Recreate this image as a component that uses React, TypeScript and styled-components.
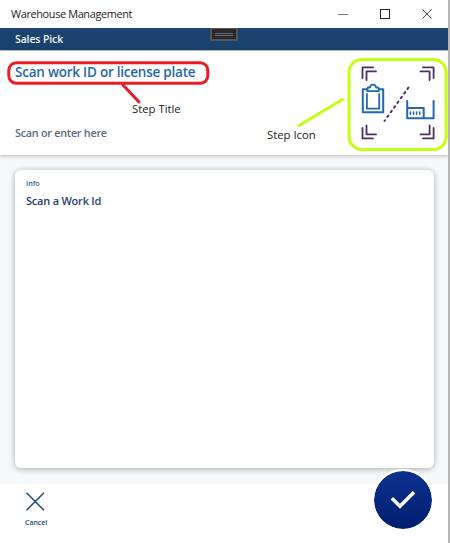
import React from "react";
import styled, { createGlobalStyle } from "styled-components";

const GlobalStyle = createGlobalStyle`
  * { box-sizing: border-box; }
  body { margin: 0; background: #fff; overflow: hidden; }
`;

const Window = styled.div`
  position: relative;
  display: flex;
  flex-direction: column;
  width: 450px;
  height: 543px;
  border-right: 2px solid #b5b5b5;
  background: #fff;
  font-family: "Open Sans", "Noto Sans", sans-serif;
  overflow: hidden;
`;

const Label = styled.span<{ $size: number; $color: string; $weight?: number; $spacing?: number }>`
  font-size: ${(p) => p.$size}px;
  line-height: 16px;
  color: ${(p) => p.$color};
  font-weight: ${(p) => p.$weight ?? 400};
  letter-spacing: ${(p) => p.$spacing ?? 0}px;
  white-space: nowrap;
`;

const TitleBar = styled.header`
  display: flex;
  flex: 0 0 28px;
  align-items: center;
  justify-content: space-between;
  padding: 0 16px 0 11px;
`;

const WindowControls = styled.div`
  display: flex;
  align-items: center;
  gap: 32px;
  svg { display: block; }
`;

const NavBar = styled.nav`
  display: flex;
  flex: 0 0 23px;
  align-items: center;
  padding: 0 0 1px 15px;
  background: #1b416f;
  border-bottom: 1px solid #bac6d6;
`;

const DebugHandle = styled.div`
  position: absolute;
  left: 210px;
  top: 28px;
  width: 28px;
  height: 13px;
  display: flex;
  align-items: center;
  justify-content: center;
  background: #292a2d;
  border: 2px solid #565656;
  border-top-width: 1px;
`;

const Grip = styled.div`
  width: 18px;
  height: 3px;
  border: solid #68696b;
  border-width: 1px 0;
`;

const ScanPanel = styled.section`
  display: flex;
  flex: 0 0 104px;
  flex-direction: column;
  justify-content: space-between;
  align-items: flex-start;
  padding: 13px 15px 14px;
  background: #fff;
  box-shadow: 0 1px 4px rgba(0, 0, 0, 0.25);
  z-index: 1;
`;

const Content = styled.main`
  display: flex;
  flex: 1;
  padding: 15px 14px 16px 15px;
  background: #f7f8fa;
`;

const Card = styled.article`
  display: flex;
  flex: 1;
  flex-direction: column;
  gap: 2px;
  padding: 5px 11px;
  border-radius: 6px;
  background: #fff;
  box-shadow: 0 1px 6px rgba(0, 0, 0, 0.32);
`;

const Footer = styled.footer`
  display: flex;
  flex: 0 0 59px;
  align-items: flex-start;
  padding: 7px 25px;
  background: #fff;
`;

const CancelButton = styled.button`
  display: flex;
  flex-direction: column;
  align-items: flex-start;
  gap: 3px;
  padding: 0;
  border: 0;
  background: none;
  font-family: inherit;
`;

const ConfirmButton = styled.button`
  position: absolute;
  left: 372px;
  top: 468.5px;
  width: 62px;
  height: 62px;
  padding: 0;
  border: 2px solid #fff;
  border-radius: 50%;
  background: linear-gradient(#0c328e, #001d70) padding-box;
  svg { display: block; }
`;

const Annotations = styled.div`
  position: absolute;
  inset: 0;
  z-index: 2;
  pointer-events: none;
  > svg { position: absolute; inset: 0; }
`;

const Callout = styled.div<{ $x: number; $y: number }>`
  position: absolute;
  left: ${(p) => p.$x}px;
  top: ${(p) => p.$y}px;
  line-height: 16px;
  display: flex;
`;

const StepIcon = styled.svg`
  position: absolute;
  left: 360px;
  top: 65px;
  z-index: 1;
`;

function ScanStepIcon() {
  return (
    <StepIcon width="76" height="76" fill="none">
      <g stroke="#493068" strokeWidth="1.8" strokeLinecap="round" strokeLinejoin="round">
        <path d="M2.5 13V2.4H13M6.5 15V6.4H16" />
        <path d="M63 2.4H73.6V13M60.5 6.4H69.6V15" />
        <path d="M2.5 63V73.4H13M6.5 60.5V69.4H16" />
        <path d="M63 73.4H73.6V63M60.5 69.4H69.6V60.5" />
        <path d="M48.5 22.5L24.5 56" strokeWidth="2" strokeDasharray="1.7 4.05" />
      </g>
      <g stroke="#2268b2" strokeWidth="2" strokeLinecap="round" strokeLinejoin="round">
        <path d="M7.5 24.3H2.8V47.2H23.2V24.3H18.7" />
        <path d="M6.9 29V43.7H19.2V29" strokeWidth="1.8" />
        <path d="M7.3 26.2V23.5Q7.3 22.5 8.5 22.5H10Q10.3 19.6 13 19.6T16 22.5H17.5Q18.7 22.5 18.7 23.5V26.2Z" strokeWidth="1.8" />
        <path d="M47.2 36V53.2H73.6V36M47.2 42.9H63.7V53.2" />
        <path d="M50.4 47V49.2M53.5 47V49.2M56.6 47V49.2M59.7 47V49.2" strokeWidth="1.6" />
      </g>
    </StepIcon>
  );
}

export default function App() {
  return (
    <>
      <GlobalStyle />
      <Window>
        <TitleBar>
          <Label $size={10.9} $color="#222" $spacing={-0.35}>Warehouse Management</Label>
          <WindowControls>
            <svg width="10" height="10"><path d="M0 5.5H10" stroke="#555" strokeWidth="0.8" /></svg>
            <svg width="10" height="10"><rect x=".5" y=".5" width="9" height="9" fill="none" stroke="#222" /></svg>
            <svg width="10" height="10"><path d="M.5 .5L9.5 9.5M9.5 .5L.5 9.5" stroke="#333" strokeWidth="0.9" /></svg>
          </WindowControls>
        </TitleBar>
        <NavBar>
          <Label $size={10.5} $weight={600} $color="#f2f5f8" $spacing={-0.12}>Sales Pick</Label>
          <DebugHandle><Grip /></DebugHandle>
        </NavBar>
        <ScanPanel>
          <Label $size={13.5} $weight={600} $color="#2867ae" $spacing={-0.23}>Scan work ID or license plate</Label>
          <Label $size={10.8} $weight={600} $color="#5c6b82" $spacing={-0.25}>Scan or enter here</Label>
        </ScanPanel>
        <ScanStepIcon />
        <Content>
          <Card>
            <Label $size={7.2} $weight={600} $color="#33639c">Info</Label>
            <Label $size={11} $weight={600} $color="#1f4270" $spacing={-0.22}>Scan a Work Id</Label>
          </Card>
        </Content>
        <Footer>
          <CancelButton>
            <svg width="20" height="21"><path d="M1.5 1.8L19 19.3M19 1.8L1.5 19.3" stroke="#234a7a" strokeWidth="1.5" /></svg>
            <Label $size={7} $weight={600} $color="#234a7a" $spacing={-0.05}>Cancel</Label>
          </CancelButton>
        </Footer>
        <ConfirmButton aria-label="Confirm">
          <svg width="58" height="58"><path d="M17.8 27.3L26 35.3L40 21.2" fill="none" stroke="#fff" strokeWidth="3.6" /></svg>
        </ConfirmButton>
        <Annotations>
          <svg width="450" height="160" fill="none" strokeLinecap="round">
            <rect x="8.8" y="62.8" width="199" height="20.5" rx="7.5" stroke="#ed1c24" strokeWidth="3" />
            <path d="M123 85L139 102" stroke="#ed1c24" strokeWidth="3" />
            <rect x="349" y="59.5" width="97.2" height="90" rx="13" stroke="#c4ff0e" strokeWidth="3" />
            <path d="M342.5 99.5L299 125.5" stroke="#c4ff0e" strokeWidth="3" />
          </svg>
          <Callout $x={132} $y={101}><Label $size={11.3} $color="#222">Step Title</Label></Callout>
          <Callout $x={267} $y={127}><Label $size={11.3} $color="#222">Step Icon</Label></Callout>
        </Annotations>
      </Window>
    </>
  );
}
